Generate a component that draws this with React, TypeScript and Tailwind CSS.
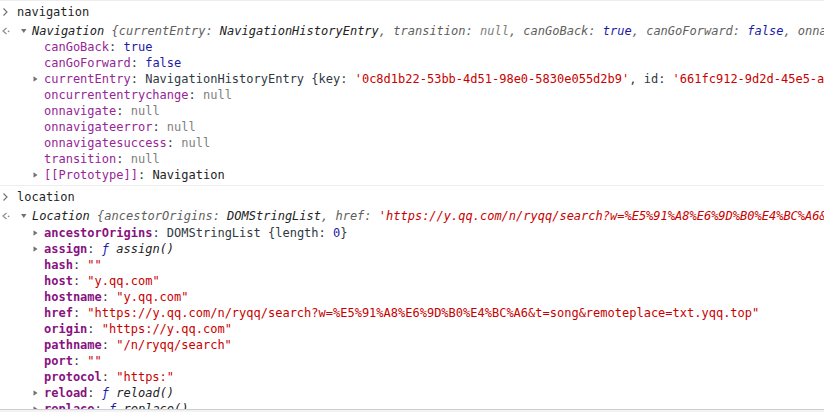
import type { ReactNode } from "react";

const MONO = "font-['DejaVu_Sans_Mono','Liberation_Mono',monospace]";

function PromptIcon() {
  return (
    <svg width="17" height="16" viewBox="0 0 17 16" className="shrink-0">
      <path d="M3.5 4.5 L7 8 L3.5 11.5" fill="none" stroke="#6e6e6e" strokeWidth="1.1" />
    </svg>
  );
}

function ResultIcon() {
  return (
    <svg width="20" height="16" viewBox="0 0 20 16" className="shrink-0">
      <path d="M6.5 5 L3 8 L6.5 11" fill="none" stroke="#8a8a8a" strokeWidth="1.1" />
      <circle cx="8.6" cy="8.3" r="0.9" fill="#8a8a8a" />
    </svg>
  );
}

function Arrow({ open = false }: { open?: boolean }) {
  return (
    <svg width="12" height="16" viewBox="0 0 12 16" className="shrink-0">
      {open ? (
        <path d="M1 6 L6.5 6 L3.75 10 Z" fill="#727272" />
      ) : (
        <path d="M1.5 5.2 L5.5 8 L1.5 10.8 Z" fill="#727272" />
      )}
    </svg>
  );
}

const Str = ({ children }: { children: ReactNode }) => <span className="text-[#c80000]">{children}</span>;
const Nul = ({ children = "null" }: { children?: ReactNode }) => <span className="text-[#808080]">{children}</span>;
const Bool = ({ children }: { children: ReactNode }) => <span className="text-[#1a1aa6]">{children}</span>;
const Key = ({ children }: { children: ReactNode }) => <span className="text-[#5e5e5e]">{children}</span>;
const Fn = ({ name }: { name: string }) => (
  <>
    <span className="italic text-[#1a1aa6]">{"ƒ "}</span>
    <span className="italic text-[#222]">{name}()</span>
  </>
);

function Prop({
  name,
  own = false,
  expandable = false,
  children,
}: {
  name: string;
  own?: boolean;
  expandable?: boolean;
  children: ReactNode;
}) {
  return (
    <div className="flex h-[16px] items-center whitespace-pre pl-[32px]">
      {expandable ? <Arrow /> : <span className="w-[12px] shrink-0" />}
      <span className={own ? "font-bold text-[#881280]" : "text-[#962596]"}>{name}</span>
      <span className="text-[#303942]">: </span>
      {children}
    </div>
  );
}

function InputRow({ text }: { text: string }) {
  return (
    <div className="mt-[3px] mb-[1px] flex h-[16px] items-center whitespace-pre text-[#1f1f1f]">
      <PromptIcon />
      {text}
    </div>
  );
}

function Header({ children }: { children: ReactNode }) {
  return (
    <div className="mt-[3px] flex h-[16px] items-center whitespace-pre">
      <ResultIcon />
      <Arrow open />
      <span className="italic text-[#222]">{children}</span>
    </div>
  );
}

export default function App() {
  return (
    <div className={`${MONO} flex h-[412px] w-[824px] flex-col overflow-hidden bg-white text-[12px] leading-[16px]`}>
      <div className="flex-1 overflow-hidden">
        <div className="border-t border-[#ededed] pb-[2px]">
          <InputRow text="navigation" />
          <Header>
            Navigation <Key>{"{currentEntry: "}</Key>NavigationHistoryEntry<Key>, transition: </Key>
            <Nul />
            <Key>, canGoBack: </Key>
            <Bool>true</Bool>
            <Key>, canGoForward: </Key>
            <Bool>false</Bool>
            <Key>, onnavigate: </Key>
            <Nul />
            <Key>, …{"}"}</Key>
          </Header>
          <Prop name="canGoBack">
            <Bool>true</Bool>
          </Prop>
          <Prop name="canGoForward">
            <Bool>false</Bool>
          </Prop>
          <Prop name="currentEntry" expandable>
            <span className="text-[#303942]">NavigationHistoryEntry {"{"}key: </span>
            <Str>'0c8d1b22-53bb-4d51-98e0-5830e055d2b9'</Str>
            <span className="text-[#303942]">, id: </span>
            <Str>'661fc912-9d2d-45e5-a1c4-0e87d3f2b6aa'</Str>
            <span className="text-[#303942]">, url: …{"}"}</span>
          </Prop>
          <Prop name="oncurrententrychange">
            <Nul />
          </Prop>
          <Prop name="onnavigate">
            <Nul />
          </Prop>
          <Prop name="onnavigateerror">
            <Nul />
          </Prop>
          <Prop name="onnavigatesuccess">
            <Nul />
          </Prop>
          <Prop name="transition">
            <Nul />
          </Prop>
          <Prop name="[[Prototype]]" expandable>
            <span className="text-[#222]">Navigation</span>
          </Prop>
        </div>

        <div className="border-t border-[#ededed]">
          <InputRow text="location" />
          <Header>
            Location <Key>{"{ancestorOrigins: "}</Key>DOMStringList<Key>, href: </Key>
            <Str>'https://y.qq.com/n/ryqq/search?w=%E5%91%A8%E6%9D%B0%E4%BC%A6&t=song&remoteplace=txt.yqq.top'</Str>
            <Key>, …{"}"}</Key>
          </Header>
          <div className="pt-[1px]">
            <Prop name="ancestorOrigins" own expandable>
              <span className="text-[#303942]">DOMStringList {"{"}length: </span>
              <Bool>0</Bool>
              <span className="text-[#303942]">{"}"}</span>
            </Prop>
            <Prop name="assign" own expandable>
              <Fn name="assign" />
            </Prop>
            <Prop name="hash" own>
              <Str>""</Str>
            </Prop>
            <Prop name="host" own>
              <Str>"y.qq.com"</Str>
            </Prop>
            <Prop name="hostname" own>
              <Str>"y.qq.com"</Str>
            </Prop>
            <Prop name="href" own>
              <Str>"https://y.qq.com/n/ryqq/search?w=%E5%91%A8%E6%9D%B0%E4%BC%A6&t=song&remoteplace=txt.yqq.top"</Str>
            </Prop>
            <Prop name="origin" own>
              <Str>"https://y.qq.com"</Str>
            </Prop>
            <Prop name="pathname" own>
              <Str>"/n/ryqq/search"</Str>
            </Prop>
            <Prop name="port" own>
              <Str>""</Str>
            </Prop>
            <Prop name="protocol" own>
              <Str>"https:"</Str>
            </Prop>
            <Prop name="reload" own expandable>
              <Fn name="reload" />
            </Prop>
            <Prop name="replace" own expandable>
              <Fn name="replace" />
            </Prop>
          </div>
        </div>
      </div>
      <div className="h-[3px] shrink-0 border-t border-[#cbcdd1] bg-[#f1f3f4]" />
    </div>
  );
}
